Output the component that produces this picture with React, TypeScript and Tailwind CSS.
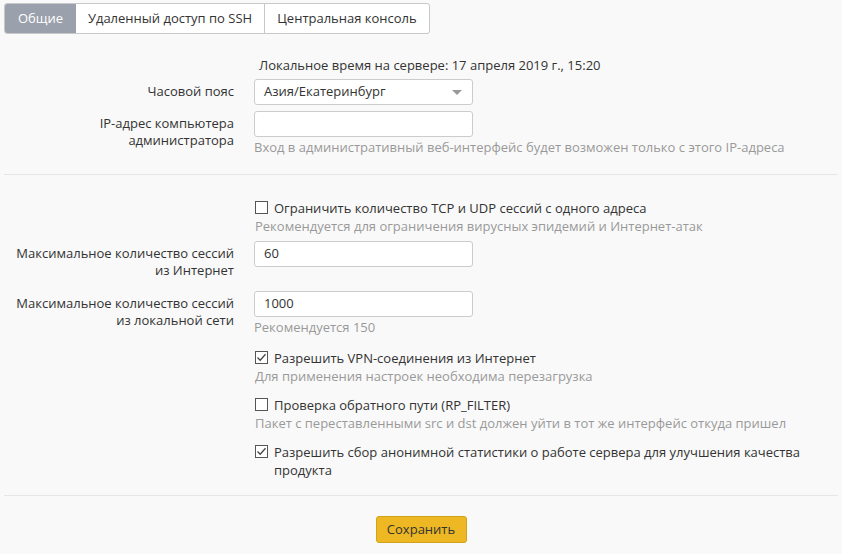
import React from "react";

const Check = ({ checked }: { checked?: boolean }) => (
  <span className="relative mt-[2px] inline-block h-[13px] w-[13px] shrink-0 border border-[#555] bg-white">
    {checked && (
      <svg viewBox="0 0 13 13" className="absolute left-[-1px] top-[-1px] h-[13px] w-[13px]">
        <path d="M2.5 6.5 L5.2 9.2 L10.5 3.3" fill="none" stroke="#444" strokeWidth="1.3" />
      </svg>
    )}
  </span>
);

const Label = ({ children }: { children: React.ReactNode }) => (
  <div className="pt-[4px] text-right leading-[17px] text-[#333]">{children}</div>
);

const Input = ({ value }: { value?: string }) => (
  <div className="flex h-[26px] w-[219px] items-center rounded-[3px] border border-[#ccc] bg-white px-[9px] text-[#333]">
    {value}
  </div>
);

const Hint = ({ children, className = "" }: { children: React.ReactNode; className?: string }) => (
  <div className={`leading-[18px] text-[#999] ${className}`}>{children}</div>
);

const CheckRow = ({ checked, label, hint, className = "" }: { checked?: boolean; label: React.ReactNode; hint?: string; className?: string }) => (
  <div className={`grid grid-cols-[234px_1fr] gap-x-[21px] ${className}`}>
    <div />
    <div>
      <div className="flex items-start gap-[6px] leading-[18px] text-[#333]">
        <Check checked={checked} />
        <span>{label}</span>
      </div>
      {hint && <Hint>{hint}</Hint>}
    </div>
  </div>
);

export default function App() {
  return (
    <div
      className="min-h-[554px] w-[842px] bg-[#f9f9f9] text-[13px] text-[#333]"
      style={{ fontFamily: '"Open Sans", "Liberation Sans", sans-serif' }}
    >
      <div className="px-[4px] pt-[3px]">
        <div className="flex h-[31px] w-[426px] overflow-hidden rounded-[3px] border border-[#c8c8c8] bg-white">
          <div className="flex w-[71px] items-center justify-center bg-[#9aa0ac] text-white">Общие</div>
          <div className="flex w-[189px] items-center justify-center border-r border-[#c8c8c8]">Удаленный доступ по SSH</div>
          <div className="flex flex-1 items-center justify-center">Центральная консоль</div>
        </div>
      </div>

      <div className="mt-[22px] pl-[259px] leading-[18px]">Локальное время на сервере: 17 апреля 2019 г., 15:20</div>

      <div className="mt-[5px] grid grid-cols-[234px_1fr] gap-x-[20px]">
        <Label>Часовой пояс</Label>
        <div className="relative flex h-[26px] w-[219px] items-center rounded-[3px] border border-[#ccc] bg-white px-[9px]">
          Азия/Екатеринбург
          <span className="absolute right-[10px] top-[10px] h-0 w-0 border-x-[5px] border-t-[5px] border-x-transparent border-t-[#999]" />
        </div>
      </div>

      <div className="mt-[6px] grid grid-cols-[234px_1fr] gap-x-[20px]">
        <Label>
          IP-адрес компьютера
          <br />
          администратора
        </Label>
        <div>
          <Input />
          <Hint className="mt-[1px]">Вход в административный веб-интерфейс будет возможен только с этого IP-адреса</Hint>
        </div>
      </div>

      <div className="mx-[4px] mt-[18px] border-t border-[#e6e6e6]" />

      <CheckRow
        className="mt-[24px]"
        label="Ограничить количество TCP и UDP сессий с одного адреса"
        hint="Рекомендуется для ограничения вирусных эпидемий и Интернет-атак"
      />

      <div className="mt-[6px] grid grid-cols-[234px_1fr] gap-x-[20px]">
        <Label>
          Максимальное количество сессий
          <br />
          из Интернет
        </Label>
        <Input value="60" />
      </div>

      <div className="mt-[12px] grid grid-cols-[234px_1fr] gap-x-[20px]">
        <Label>
          Максимальное количество сессий
          <br />
          из локальной сети
        </Label>
        <div>
          <Input value="1000" />
          <Hint className="mt-[1px]">Рекомендуется 150</Hint>
        </div>
      </div>

      <CheckRow
        className="mt-[13px]"
        checked
        label="Разрешить VPN-соединения из Интернет"
        hint="Для применения настроек необходима перезагрузка"
      />
      <CheckRow
        className="mt-[11px]"
        label="Проверка обратного пути (RP_FILTER)"
        hint="Пакет с переставленными src и dst должен уйти в тот же интерфейс откуда пришел"
      />
      <CheckRow
        className="mt-[11px]"
        checked
        label={
          <>
            Разрешить сбор анонимной статистики о работе сервера для улучшения качества
            <br />
            продукта
          </>
        }
      />

      <div className="mx-[4px] mt-[16px] border-t border-[#e6e6e6]" />

      <div className="mt-[20px] flex justify-center pb-[10px]">
        <button className="h-[27px] w-[91px] rounded-[3px] border border-[#d1a21c] bg-[#edb823] text-[13px] text-[#333]">
          Сохранить
        </button>
      </div>
    </div>
  );
}
